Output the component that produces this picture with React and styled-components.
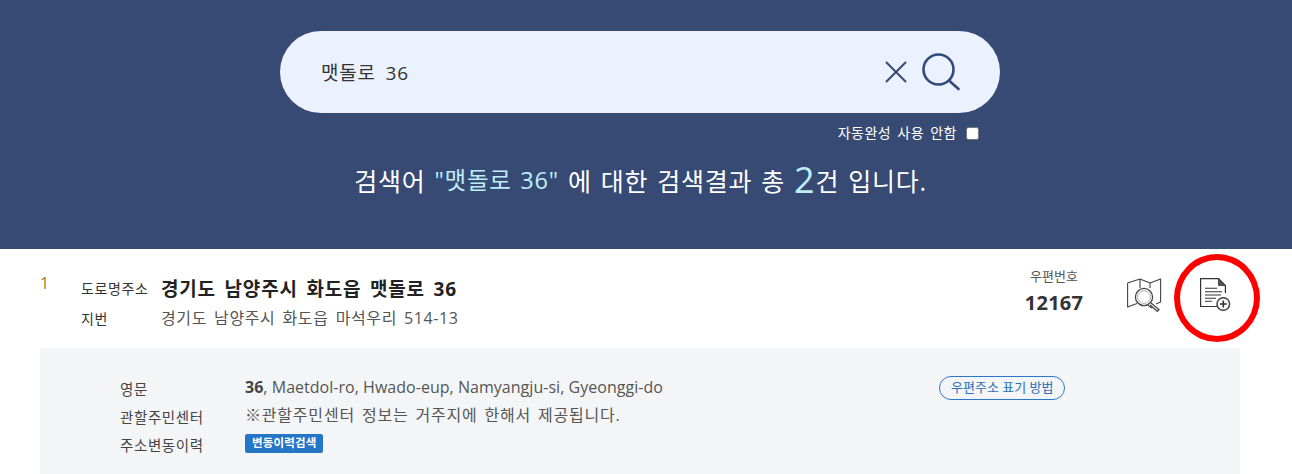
import styled, { createGlobalStyle } from "styled-components";

const GlobalStyle = createGlobalStyle`
  html, body {
    margin: 0;
    padding: 0;
    background: #fff;
    overflow: hidden;
  }
  body {
    font-family: "Open Sans", "Noto Sans CJK KR", sans-serif;
    color: #333;
  }
  * { box-sizing: border-box; }
`;

const Page = styled.div`
  width: 1292px;
  height: 474px;
  overflow: hidden;
  position: relative;
`;

const Header = styled.header`
  height: 249px;
  background: #374a73;
  padding: 31px 12px 0 0;
  display: flex;
  flex-direction: column;
  align-items: center;
`;

const SearchBox = styled.div`
  width: 720px;
  height: 82px;
  border-radius: 41px;
  background: #ecf2fd;
  display: flex;
  align-items: center;
  padding: 0 40px 0 41px;
`;

const SearchText = styled.div`
  flex: 1;
  font-size: 19px;
  letter-spacing: 0.8px;
  word-spacing: 4px;
  color: #333;
  line-height: 24px;
  margin-top: 1px;
`;

const IconButton = styled.button`
  border: 0;
  padding: 0;
  background: none;
  display: flex;
  margin-left: ${({ $gap }) => $gap || 0}px;
`;

const AutoRow = styled.div`
  width: 720px;
  display: flex;
  justify-content: flex-end;
  align-items: center;
  padding-right: 21px;
  margin-top: 9px;
  height: 20px;
  color: #fff;
  font-size: 14px;
  letter-spacing: 0.5px;
  word-spacing: 2px;
`;

const Check = styled.span`
  width: 13px;
  height: 13px;
  margin-left: 9px;
  margin-top: 2px;
  background: #fff;
  border: 1px solid #767676;
  border-radius: 2.5px;
`;

const Summary = styled.div`
  margin: 16px 0 0 1px;
  height: 44px;
  display: flex;
  align-items: center;
  color: #fff;
  font-size: 25px;
  letter-spacing: 0.75px;
  word-spacing: 1.8px;
  white-space: pre;
`;

const Keyword = styled.span`
  color: #bdeefb;
  font-size: ${({ $big }) => ($big ? "36px" : "23.5px")};
  line-height: 44px;
`;

const Result = styled.section`
  width: 1280px;
  padding: 0 40px;
`;

const ResultRow = styled.div`
  height: 99px;
  display: flex;
  align-items: flex-start;
`;

const Rank = styled.div`
  width: 41px;
  padding-top: 24px;
  font-size: 16px;
  line-height: 20px;
  color: #a5792a;
`;

const Addresses = styled.div`
  flex: 1;
  padding-top: 24px;
  display: grid;
  grid-template-columns: 80px 1fr;
  grid-auto-rows: 29px;
  align-items: center;
`;

const AddrLabel = styled.div`
  font-size: 14px;
  letter-spacing: 0.6px;
  color: #333;
  margin-top: ${({ $low }) => ($low ? "3px" : "0")};
`;

const RoadAddress = styled.div`
  font-size: 19px;
  font-weight: 700;
  letter-spacing: 0.8px;
  word-spacing: 3px;
  color: #222;
`;

const LotAddress = styled.div`
  font-size: 16px;
  letter-spacing: 0.6px;
  word-spacing: 2.4px;
  color: #555;
`;

const Postal = styled.div`
  width: 100px;
  margin-right: 23px;
  padding-top: 19px;
  text-align: center;
`;

const PostalLabel = styled.div`
  font-size: 13px;
  line-height: 16px;
  color: #555;
`;

const PostalCode = styled.div`
  font-size: 20px;
  font-weight: 700;
  letter-spacing: 0.3px;
  line-height: 24px;
  margin-top: 7px;
  color: #333;
`;

const Tools = styled.div`
  width: 113px;
  padding-top: 29px;
  display: flex;
  gap: 37px;
`;

const Panel = styled.div`
  height: 126px;
  background: #f4f5f7;
  padding: 26px 80px 0;
  display: grid;
  grid-template-columns: 125px 694px 1fr;
  grid-auto-rows: 28px;
  align-items: center;
`;

const PanelLabel = styled.div`
  font-size: 14.5px;
  letter-spacing: 0.6px;
  color: #444;
  padding-top: 1px;
  margin-top: -1px;
`;

const PanelText = styled.div`
  font-size: 16px;
  color: #555;
  line-height: 24px;
  margin-top: -2px;
  grid-column: ${({ $wide }) => ($wide ? "2 / 4" : "auto")};
  letter-spacing: ${({ $korean }) => ($korean ? "0.8px" : "0.03px")};
  word-spacing: ${({ $korean }) => ($korean ? "2px" : "0")};
  b {
    color: #444;
  }
`;

const GuideButton = styled.div`
  justify-self: start;
  height: 24px;
  padding: 0 11px;
  border: 1px solid #2a77c9;
  border-radius: 12px;
  background: transparent;
  color: #2a6fb8;
  font-size: 13px;
  line-height: 21px;
`;

const TagCell = styled.div`
  grid-column: 2 / 4;
  height: 19px;
  margin-top: -1px;
  display: flex;
`;

const Tag = styled.span`
  height: 19px;
  padding: 0 7px;
  border-radius: 2px;
  background: #2576c9;
  color: #fff;
  font-size: 11.5px;
  font-weight: 700;
  letter-spacing: 0.15px;
  line-height: 18px;
`;

// red marker drawn over the screenshot
const RedRing = styled.div`
  position: absolute;
  left: 1174px;
  top: 254px;
  width: 86px;
  height: 88px;
  border: 6px solid #ff0000;
  border-radius: 50%;
  pointer-events: none;
`;

const CloseIcon = () => (
  <svg width="22" height="22" viewBox="0 0 22 22" fill="none" stroke="#374a73" strokeWidth="2">
    <path d="M1 1L21 21M21 1L1 21" />
  </svg>
);

const SearchIcon = () => (
  <svg width="38" height="38" viewBox="0 0 38 38" fill="none" stroke="#2f4a7c" strokeWidth="2.6">
    <circle cx="16.5" cy="16.5" r="15" />
    <path d="M27 27.5L36.5 36" strokeLinecap="round" />
  </svg>
);

const MapIcon = () => (
  <svg width="36" height="34" viewBox="0 0 36 34" fill="none" stroke="#444" strokeWidth="1.1">
    <path d="M0.6 5L13 1L23 5L33.6 1V24L29 26M0.6 5V29L10 25.5M13 1V10M23 5V10M12 26L16 28M21 27.5L25 30" strokeLinejoin="round" />
    <circle cx="17" cy="19" r="8.6" strokeWidth="1.3" />
    <circle cx="17" cy="19" r="6.4" stroke="#999" strokeWidth="0.8" />
    <path d="M24 25L32 31.5L30.3 33.3L23 27" strokeWidth="1.3" fill="#fff" />
  </svg>
);

const DocAddIcon = () => (
  <svg width="32" height="34" viewBox="0 0 32 34" fill="none" stroke="#333">
    <path d="M17 28.5H0.6V0.6H18.5L25.4 7.5V15" strokeWidth="1.2" />
    <path d="M18.5 1V7.5H25Z" fill="#555" strokeWidth="0.8" />
    <path d="M5 10.3H17M5 13.7H22M5 17H21M5 20.2H16M5 23.3H12" strokeWidth="1.1" />
    <circle cx="23.3" cy="26" r="6.3" stroke="#444" strokeWidth="1.5" fill="#fff" />
    <path d="M19.8 26H26.8M23.3 22.5V29.5" strokeWidth="1.6" />
  </svg>
);

export default function App() {
  return (
    <Page>
      <GlobalStyle />
      <Header>
        <SearchBox>
          <SearchText>맷돌로 36</SearchText>
          <IconButton><CloseIcon /></IconButton>
          <IconButton $gap={15}><SearchIcon /></IconButton>
        </SearchBox>
        <AutoRow>
          자동완성 사용 안함
          <Check />
        </AutoRow>
        <Summary>
          검색어 <Keyword>"맷돌로 36"</Keyword> 에 대한 검색결과 총 <Keyword $big>2</Keyword>건 입니다.
        </Summary>
      </Header>
      <Result>
        <ResultRow>
          <Rank>1</Rank>
          <Addresses>
            <AddrLabel>도로명주소</AddrLabel>
            <RoadAddress>경기도 남양주시 화도읍 맷돌로 36</RoadAddress>
            <AddrLabel $low>지번</AddrLabel>
            <LotAddress>경기도 남양주시 화도읍 마석우리 514-13</LotAddress>
          </Addresses>
          <Postal>
            <PostalLabel>우편번호</PostalLabel>
            <PostalCode>12167</PostalCode>
          </Postal>
          <Tools>
            <IconButton><MapIcon /></IconButton>
            <IconButton><DocAddIcon /></IconButton>
          </Tools>
        </ResultRow>
        <Panel>
          <PanelLabel>영문</PanelLabel>
          <PanelText><b>36</b>, Maetdol-ro, Hwado-eup, Namyangju-si, Gyeonggi-do</PanelText>
          <GuideButton>우편주소 표기 방법</GuideButton>
          <PanelLabel>관할주민센터</PanelLabel>
          <PanelText $wide $korean>※관할주민센터 정보는 거주지에 한해서 제공됩니다.</PanelText>
          <PanelLabel>주소변동이력</PanelLabel>
          <TagCell><Tag>변동이력검색</Tag></TagCell>
        </Panel>
      </Result>
      <RedRing />
    </Page>
  );
}
